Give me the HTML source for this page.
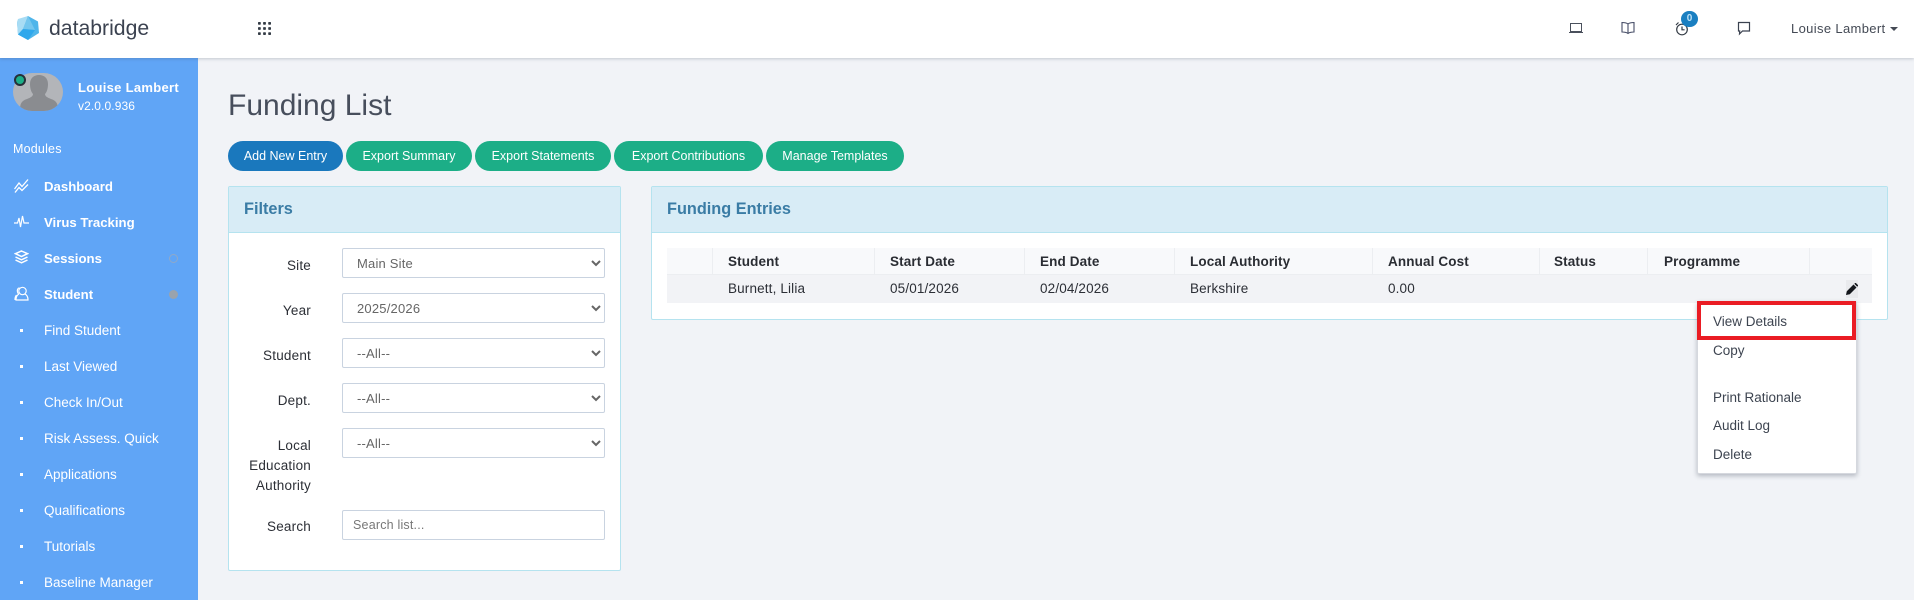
<!DOCTYPE html>
<html><head><meta charset="utf-8"><title>Funding List</title>
<style>
*{box-sizing:border-box}
html,body{margin:0;padding:0;width:1914px;height:600px;overflow:hidden;background:#f1f3f7;font-family:"Liberation Sans",sans-serif;font-size:13.5px;color:#2c2f36}
.a{position:absolute;white-space:nowrap;line-height:1}
#top{position:absolute;left:0;top:0;width:1914px;height:58px;background:#fff;box-shadow:0 1px 3px rgba(60,70,90,.25);z-index:3}
#side{position:absolute;left:0;top:58px;width:198px;height:542px;background:#60a5f6;color:#fff;overflow:hidden}
.nav{position:absolute;left:44px;color:#fff;line-height:16px;white-space:nowrap;margin-top:1px}
.nav.b{font-weight:bold;font-size:13.2px}
.dot{position:absolute;left:20px;width:3px;height:3px;background:#fff}
.btn{position:absolute;top:141px;height:30px;border-radius:15px;color:#fff;background:#1cae87;text-align:center;line-height:30px;font-size:12.5px}
.panel{position:absolute;background:#fff;border:1px solid #b5e3ef;border-radius:2px}
.ph{position:absolute;left:0;top:0;right:0;height:46px;background:#d8ecf6;border-bottom:1px solid #b5e3ef;color:#3a7ca5;font-weight:bold;font-size:16.3px;line-height:45px;padding-left:15px}
.lab{position:absolute;right:1603px;text-align:right;line-height:20px;letter-spacing:.2px}
select,input{position:absolute;left:342px;width:263px;height:30px;border:1px solid #c9d3e0;border-radius:2px;background:#fff;font:13px "Liberation Sans",sans-serif;color:#666;padding:1px 10px 0;letter-spacing:.2px}
input{left:342px;height:30px;font-size:12.5px;padding:0 10px}
input::placeholder{color:#777}
.th{position:absolute;top:254px;font-weight:bold;line-height:16px;letter-spacing:.12px;color:#2a2d33}
.td{position:absolute;top:281px;line-height:16px;letter-spacing:.15px}
.sep{position:absolute;top:248px;width:1px;height:26px;background:#eceef1}
.mi{position:absolute;left:1713px;line-height:16px;color:#3d4450;z-index:6;margin-top:1px}
</style></head><body>
<div id="top">
<svg class="a" style="left:16px;top:15px" width="24" height="26" viewBox="0 0 24 26"><polygon points="12,1 22,6.500 23,18 12,25 2,19.500 1,7" fill="#4fb5ea"/><polygon points="12,1 2,4 1,7 2,19.500 7,14" fill="#a8dcf4"/><polygon points="12,1 7,14 19,15" fill="#74c6ee"/><polygon points="7,14 19,15 12,25 2,19.500" fill="#2fa8ec"/></svg>
<div class="a" style="left:49px;top:17px;font-size:21.2px;color:#3b4250;line-height:24px">databridge</div>
<svg class="a" style="left:258px;top:22px" width="13" height="13" viewBox="0 0 14 14" fill="#333b45"><rect x="0" y="0" width="3" height="3" rx=".8"/><rect x="5.500" y="0" width="3" height="3" rx=".8"/><rect x="11" y="0" width="3" height="3" rx=".8"/><rect x="0" y="5.500" width="3" height="3" rx=".8"/><rect x="5.500" y="5.500" width="3" height="3" rx=".8"/><rect x="11" y="5.500" width="3" height="3" rx=".8"/><rect x="0" y="11" width="3" height="3" rx=".8"/><rect x="5.500" y="11" width="3" height="3" rx=".8"/><rect x="11" y="11" width="3" height="3" rx=".8"/></svg>
<svg class="a" style="left:1569px;top:22px" width="14" height="12" viewBox="0 0 14 12" fill="none" stroke="#4a505c" stroke-width="1"><rect x="1.500" y="1.500" width="11" height="8"/><path d="M0 10.500h14"/></svg>
<svg class="a" style="left:1621px;top:21px" width="14" height="14" viewBox="0 0 14 14" fill="none" stroke="#454c66" stroke-width="1.100"><path d="M7 3C5.500 1.800 3.500 1.500 1 1.500V11c2.500 0 4.500.3 6 1.500 1.500-1.200 3.500-1.500 6-1.500V1.500C10.500 1.500 8.500 1.800 7 3zM7 3v9.500"/></svg>
<svg class="a" style="left:1675px;top:21px" width="14" height="15" viewBox="0 0 14 15" fill="none" stroke="#333b45" stroke-width="1.200"><circle cx="7" cy="8.500" r="5.300"/><path d="M7 5.500v3.300h2.600M1 4l2.500-2.500M13 4l-2.500-2.500"/></svg>
<div class="a" style="left:1681px;top:11px;width:17px;height:16px;border-radius:9px;background:#1a7fc1;color:#bfe3f8;font-size:10px;font-weight:bold;text-align:center;line-height:16px">0</div>
<svg class="a" style="left:1737px;top:21px" width="14" height="15" viewBox="0 0 14 15" fill="none" stroke="#3b4250" stroke-width="1.200"><path d="M1.500 1.500h11v8.500H5.500L2.500 13l.2-3H1.500z"/></svg>
<div class="a" style="left:1791px;top:21px;line-height:16px;font-size:13px;color:#444a55;letter-spacing:.35px">Louise Lambert</div>
<div class="a" style="left:1890px;top:27px;width:0;height:0;border:4px solid transparent;border-top:4px solid #444a55;border-bottom:0"></div>
</div>
<div id="side">
<svg class="a" style="left:13px;top:15px;border-radius:19px" width="50" height="38" viewBox="0 0 50 38"><rect width="50" height="38" fill="#b3b5b9"/><path d="M7 38c0-7 1-10 7-12 4-1.500 6-3 6-5-2-2-3-6-3-10 0-6 4-9 9-9s9 3 9 9c0 4-1 8-3 10 0 2 2 3.500 6 5 6 2 7 5 7 12z" fill="#8a8c90"/></svg>
<div class="a" style="left:14px;top:16px;width:12px;height:12px;border-radius:50%;background:#1cae87;border:2px solid #26303a"></div>
<div class="a" style="left:78px;top:23px;font-weight:bold;font-size:13px;line-height:14px;letter-spacing:.3px">Louise Lambert</div>
<div class="a" style="left:78px;top:41px;font-size:12px;line-height:14px;letter-spacing:.1px">v2.0.0.936</div>
<div class="a" style="left:13px;top:84px;font-size:12.500px;line-height:14px;letter-spacing:.2px">Modules</div>
<svg class="a" style="left:14px;top:120px" width="15" height="15" viewBox="0 0 15 15" fill="none" stroke="#fff" stroke-width="1.300"><path d="M0.500 11l4.500-6 3 3.500L14 1.500M1 14.500l4-5 3 3 6-6"/></svg>
<div class="nav b" style="top:120px">Dashboard</div>
<svg class="a" style="left:14px;top:157px" width="15" height="14" viewBox="0 0 15 14" fill="none" stroke="#fff" stroke-width="1.200"><path d="M0 8h3.500L5 3l1.500 9L8.500 1l1.500 7h5"/></svg>
<div class="nav b" style="top:156px">Virus Tracking</div>
<svg class="a" style="left:14px;top:192px" width="15" height="14" viewBox="0 0 15 14" fill="none" stroke="#fff" stroke-width="1.500"><path d="M7.500 1l6 2.700-6 2.800-6-2.800zM1.500 7l6 2.800 6-2.800M1.500 10l6 2.800 6-2.800"/></svg>
<div class="nav b" style="top:192px">Sessions</div>
<div class="a" style="left:169px;top:196px;width:9px;height:9px;border-radius:50%;border:1px solid #8fa9c9"></div>
<svg class="a" style="left:14px;top:228px" width="15" height="15" viewBox="0 0 15 15" fill="none" stroke="#fff" stroke-width="1.200"><circle cx="8.500" cy="5" r="3.700"/><path d="M5 8c-2 1-3 3.500-3 6h12c0-2.500-1-5-3-6M5.500 1.800C3.500 2.200 3 4 3.500 6c.3 1 .7 1.800 1.300 2.300M2.500 9C1.500 10 1 12 1 14"/></svg>
<div class="nav b" style="top:228px">Student</div>
<div class="a" style="left:169px;top:232px;width:9px;height:9px;border-radius:50%;background:#9aa3ad"></div>
<div class="dot" style="top:271px"></div><div class="nav" style="top:264px">Find Student</div>
<div class="dot" style="top:307px"></div><div class="nav" style="top:300px">Last Viewed</div>
<div class="dot" style="top:343px"></div><div class="nav" style="top:336px">Check In/Out</div>
<div class="dot" style="top:379px"></div><div class="nav" style="top:372px">Risk Assess. Quick</div>
<div class="dot" style="top:415px"></div><div class="nav" style="top:408px">Applications</div>
<div class="dot" style="top:451px"></div><div class="nav" style="top:444px">Qualifications</div>
<div class="dot" style="top:487px"></div><div class="nav" style="top:480px">Tutorials</div>
<div class="dot" style="top:523px"></div><div class="nav" style="top:516px">Baseline Manager</div>
</div>

<div class="a" style="left:228px;top:88px;font-size:30px;line-height:36px;color:#474e5c">Funding List</div>

<div class="btn" style="left:228px;width:115px;background:#1a78bd">Add New Entry</div>
<div class="btn" style="left:346px;width:126px">Export Summary</div>
<div class="btn" style="left:475px;width:136px">Export Statements</div>
<div class="btn" style="left:614px;width:149px">Export Contributions</div>
<div class="btn" style="left:766px;width:138px">Manage Templates</div>

<div class="panel" style="left:228px;top:186px;width:393px;height:385px"><div class="ph">Filters</div></div>
<div class="lab" style="top:256px">Site</div>
<select style="top:248px"><option>Main Site</option></select>
<div class="lab" style="top:301px">Year</div>
<select style="top:293px"><option>2025/2026</option></select>
<div class="lab" style="top:346px">Student</div>
<select style="top:338px"><option>--All--</option></select>
<div class="lab" style="top:391px">Dept.</div>
<select style="top:383px"><option>--All--</option></select>
<div class="lab" style="top:436px">Local<br>Education<br>Authority</div>
<select style="top:428px"><option>--All--</option></select>
<div class="lab" style="top:517px">Search</div>
<input style="top:510px" placeholder="Search list...">

<div class="panel" style="left:651px;top:186px;width:1237px;height:134px"><div class="ph">Funding Entries</div></div>
<div class="a" style="left:667px;top:248px;width:1205px;height:27px;background:#f8f9fb;border-bottom:1px solid #eceef1"></div>
<div class="a" style="left:667px;top:275px;width:1205px;height:28px;background:#f2f3f6"></div>
<div class="sep" style="left:712px"></div><div class="sep" style="left:874px"></div><div class="sep" style="left:1024px"></div><div class="sep" style="left:1174px"></div><div class="sep" style="left:1372px"></div><div class="sep" style="left:1539px"></div><div class="sep" style="left:1647px"></div><div class="sep" style="left:1809px"></div>
<div class="th" style="left:728px">Student</div><div class="th" style="left:890px">Start Date</div><div class="th" style="left:1040px">End Date</div><div class="th" style="left:1190px">Local Authority</div><div class="th" style="left:1388px">Annual Cost</div><div class="th" style="left:1554px">Status</div><div class="th" style="left:1664px">Programme</div>
<div class="td" style="left:728px">Burnett, Lilia</div><div class="td" style="left:890px">05/01/2026</div><div class="td" style="left:1040px">02/04/2026</div><div class="td" style="left:1190px">Berkshire</div><div class="td" style="left:1388px">0.00</div>
<div class="a" style="left:1846px;top:280px;width:12px;height:18px;background:#e9eaed"></div>
<svg class="a" style="left:1846px;top:283px" width="12" height="12" viewBox="0 0 12 12"><path d="M0 12l.8-3.800L7.500 1.500l3 3-6.700 6.700zM8.300.8L9 .1c.3-.2.700-.2 1 0l1.900 1.900c.2.300.2.700 0 1l-.7.700z" fill="#14171c"/></svg>

<div class="a" style="left:1697px;top:301px;width:160px;height:173px;background:#fff;border:1px solid #d5d8de;border-radius:2px;box-shadow:0 2px 5px rgba(40,50,70,.3);z-index:5"></div>
<div class="a" style="left:1697px;top:301px;width:159px;height:39px;border:4px solid #ea1c24;z-index:6"></div>
<div class="mi" style="top:313px">View Details</div>
<div class="mi" style="top:342px">Copy</div>
<div class="mi" style="top:389px">Print Rationale</div>
<div class="mi" style="top:417px">Audit Log</div>
<div class="mi" style="top:446px">Delete</div>
</body></html>
